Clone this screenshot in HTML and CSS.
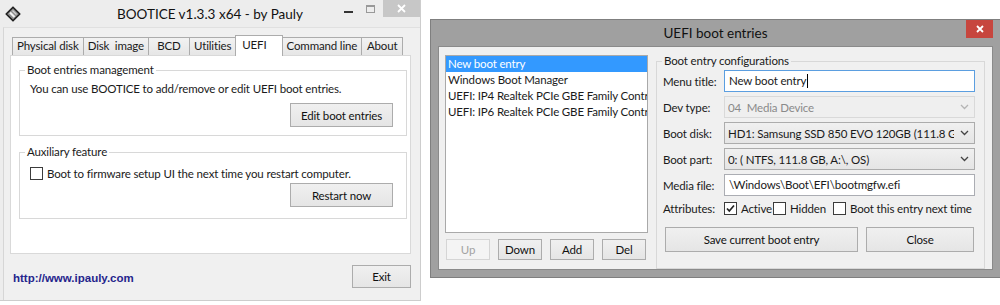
FILE: index.html
```html
<!DOCTYPE html>
<html lang="en">
<head>
  <meta charset="UTF-8" />
  <meta name="viewport" content="width=device-width, initial-scale=1" />
  <title>BOOTICE - UEFI boot entries</title>
  <link rel="stylesheet" href="styles.css">
</head>
<body>
  <div class="win main">
    <div class="titlebar">
      <span class="app-icon">
        <svg width="16" height="16" viewBox="0 0 16 16">
          <path d="M8 1.2 14.8 8 8 14.8 1.2 8Z" fill="#8c8c8c" stroke="#1f1f1f" stroke-width="1.6" stroke-linejoin="round"/>
          <path d="M5 6.5 9.5 11" stroke="#f2f2f2" stroke-width="2.2"/>
          <path d="M7.5 4.5 11.5 8.5" stroke="#d0d0d0" stroke-width="1.4"/>
        </svg>
      </span>
      <span class="title">BOOTICE v1.3.3 x64 - by Pauly</span>
      <span class="controls">
        <span class="ctl min"></span>
        <span class="ctl max"></span>
        <span class="ctl close grey">
          <svg width="9" height="9" viewBox="0 0 9 9"><path d="M1 1 8 8M8 1 1 8" stroke="#fff" stroke-width="1.8"/></svg>
        </span>
      </span>
    </div>

    <div class="client">
      <div class="tabs">
        <span class="tab">Physical disk</span>
        <span class="tab">Disk&nbsp; image</span>
        <span class="tab">BCD</span>
        <span class="tab">Utilities</span>
        <span class="tab active">UEFI</span>
        <span class="tab">Command line</span>
        <span class="tab">About</span>
      </div>

      <div class="panel">
        <fieldset class="group">
          <legend>Boot entries management</legend>
          <p class="note">You can use BOOTICE to add/remove or edit UEFI boot entries.</p>
          <div class="btn-row"><button class="btn wide">Edit boot entries</button></div>
        </fieldset>

        <fieldset class="group second">
          <legend>Auxiliary feature</legend>
          <div class="check"><span class="box"></span>Boot to firmware setup UI the next time you restart computer.</div>
          <div class="btn-row tight"><button class="btn wide">Restart now</button></div>
        </fieldset>
      </div>

      <div class="footer">
        <span class="site">http://www.ipauly.com</span>
        <button class="btn exit">Exit</button>
      </div>
    </div>
  </div>

  <div class="win dialog">
    <div class="titlebar">
      <span></span>
      <span class="title">UEFI boot entries</span>
      <span class="controls">
        <span class="ctl close red">
          <svg width="8" height="8" viewBox="0 0 8 8"><path d="M1 1 7 7M7 1 1 7" stroke="#fff" stroke-width="1.8"/></svg>
        </span>
      </span>
    </div>

    <div class="client">
      <div class="entries">
        <ul class="listbox">
          <li class="sel">New boot entry</li>
          <li>Windows Boot Manager</li>
          <li>UEFI: IP4 Realtek PCIe GBE Family Controller</li>
          <li>UEFI: IP6 Realtek PCIe GBE Family Controller</li>
        </ul>
        <div class="list-btns">
          <button class="btn small" disabled>Up</button>
          <button class="btn small">Down</button>
          <button class="btn small">Add</button>
          <button class="btn small">Del</button>
        </div>
      </div>

      <fieldset class="group config">
        <legend>Boot entry configurations</legend>
        <div class="form">
          <label>Menu title:</label>
          <div class="edit focus">New boot entry<span class="caret"></span></div>

          <label>Dev type:</label>
          <div class="combo disabled">
            <span class="value">04&nbsp; Media Device</span>
            <svg class="chev" width="9" height="6" viewBox="0 0 9 6"><path d="M1 1 4.5 4.5 8 1" fill="none" stroke="#b4b4b4" stroke-width="1.3"/></svg>
          </div>

          <label>Boot disk:</label>
          <div class="combo">
            <span class="value">HD1: Samsung SSD 850 EVO 120GB (111.8 GB, 1 part)</span>
            <svg class="chev" width="9" height="6" viewBox="0 0 9 6"><path d="M1 1 4.5 4.5 8 1" fill="none" stroke="#444" stroke-width="1.3"/></svg>
          </div>

          <label>Boot part:</label>
          <div class="combo">
            <span class="value">0: ( NTFS, 111.8 GB, A:\, OS)</span>
            <svg class="chev" width="9" height="6" viewBox="0 0 9 6"><path d="M1 1 4.5 4.5 8 1" fill="none" stroke="#444" stroke-width="1.3"/></svg>
          </div>

          <label>Media file:</label>
          <div class="edit">\Windows\Boot\EFI\bootmgfw.efi</div>

          <label>Attributes:</label>
          <div class="attrs">
            <span class="check attr-active">
              <span class="box">
                <svg width="11" height="11" viewBox="0 0 11 11"><path d="M2 5.5 4.3 8 9 2.5" fill="none" stroke="#222" stroke-width="1.7"/></svg>
              </span>Active
            </span>
            <span class="check attr-hidden"><span class="box"></span>Hidden</span>
            <span class="check"><span class="box"></span>Boot this entry next time</span>
          </div>
        </div>

        <div class="actions">
          <button class="btn save">Save current boot entry</button>
          <button class="btn close-btn">Close</button>
        </div>
      </fieldset>
    </div>
  </div>
</body>
</html>
```

FILE: styles.css
```css
* {
  box-sizing: border-box;
}
body {
  margin: 0;
  width: 1000px;
  height: 305px;
  overflow: hidden;
  display: flex;
  align-items: flex-start;
  background: #fff;
  font-family: Lato, "Noto Sans", sans-serif;
  font-size: 11.5px;
  letter-spacing: -0.15px;
  color: #1a1a1a;
}

/* window chrome */
.win {
  display: flex;
  flex-direction: column;
}
.titlebar {
  display: grid;
  grid-template-columns: minmax(0, 1fr) auto minmax(0, 1fr);
  align-items: center;
  flex: none;
}
.titlebar .title {
  font-size: 13.5px;
  letter-spacing: 0;
  color: #111;
}
.controls {
  justify-self: end;
  align-self: start;
  display: flex;
  align-items: flex-start;
}
.ctl {
  display: block;
}
.ctl.min {
  width: 9px;
  height: 2px;
  margin: 11px 13px 0 0;
  background: #333;
}
.ctl.max {
  width: 9px;
  height: 8px;
  margin: 5px 8px 0 0;
  border: 1px solid #999;
  border-top-width: 2px;
}
.ctl.close {
  display: flex;
  align-items: center;
  justify-content: center;
}
.ctl.close.grey {
  width: 37px;
  height: 17px;
  background: #c7c7c7;
}
.ctl.close.red {
  width: 27px;
  height: 18px;
  background: #c7463e;
}

/* main BOOTICE window */
.main {
  width: 421px;
  height: 301px;
  flex: none;
  background: #ededed;
  border-right: 1px solid #cdcdcd;
  border-bottom: 1px solid #cdcdcd;
}
.main .titlebar {
  height: 27px;
}
.app-icon {
  margin-left: 5px;
  display: flex;
}
.main .client {
  flex: 1;
  margin-left: 3px;
  border-left: 1px solid #d6d6d6;
  border-top: 1px solid #e0e0e0;
  background: #f0f0f0;
  padding: 7px 9px 0 6px;
}
.tabs {
  display: flex;
  align-items: flex-end;
  height: 20px;
  margin-left: 3px;
}
.tab {
  height: 18px;
  min-width: 42px;
  line-height: 16px;
  padding: 0 4px;
  margin-left: -1px;
  text-align: center;
  border: 1px solid #acacac;
  border-bottom: none;
  background: linear-gradient(#f2f2f2, #e6e6e6);
  white-space: nowrap;
}
.tab.active {
  position: relative;
  z-index: 1;
  height: 21px;
  margin-bottom: -1px;
  padding: 0 15px 0 6px;
  text-align: left;
  background: #fff;
  line-height: 17px;
}
.panel {
  height: 199px;
  background: #fff;
  border: 1px solid #d9d9d9;
  padding: 7px 3px 0 8px;
}

/* group boxes */
.group {
  margin: 0;
  min-width: 0;
  border: 1px solid #d8d8d8;
  padding: 0 13px 8px 10px;
}
.group legend {
  padding: 0 2px;
  margin-left: -5px;
  line-height: 14px;
}
.group.second {
  margin-top: 9px;
  padding-bottom: 11px;
}
.note {
  margin: 4px 0 0;
  line-height: 16px;
}
.btn-row {
  display: flex;
  justify-content: flex-end;
  margin-top: 6px;
}
.btn-row.tight {
  margin-top: 2px;
}
.check {
  display: flex;
  align-items: center;
  height: 16px;
  white-space: nowrap;
}
.group.second .check {
  margin-top: 6px;
}
.box {
  width: 13px;
  height: 13px;
  flex: none;
  margin-right: 4px;
  border: 1px solid #3c3c3c;
  background: #fff;
  display: flex;
  align-items: center;
  justify-content: center;
}

/* buttons */
.btn {
  font: inherit;
  letter-spacing: inherit;
  color: #111;
  height: 24px;
  padding: 0 6px;
  border: 1px solid #acacac;
  border-radius: 0;
  background: linear-gradient(#f0f0f0, #e5e5e5);
  white-space: nowrap;
}
.btn:disabled {
  color: #a3a3a3;
  border-color: #d5d5d5;
  background: #f4f4f4;
}
.btn.wide {
  width: 103px;
}
.footer {
  display: flex;
  align-items: center;
  justify-content: space-between;
  margin-top: 11px;
  padding-left: 3px;
}
.site {
  font-family: "Liberation Sans", Arial, sans-serif;
  font-weight: bold;
  font-size: 11.5px;
  letter-spacing: 0;
  color: #25258c;
  margin-top: 2px;
}
.btn.exit {
  width: 59px;
  height: 23px;
}

/* UEFI boot entries dialog */
.dialog {
  width: 570px;
  height: 259px;
  flex: none;
  margin: 19px 0 0 9px;
  background: #a0a0a0;
  border: 1px solid #7f7f7f;
  border-right: none;
  padding: 0 7px 7px 7px;
}
.dialog .titlebar {
  height: 26px;
}
.dialog .client {
  flex: 1;
  display: flex;
  gap: 8px;
  background: #f0f0f0;
  border: 1px solid #8a8a8a;
  padding: 7px 7px 0 6px;
}
.entries {
  width: 203px;
  flex: none;
  display: flex;
  flex-direction: column;
}
.listbox {
  list-style: none;
  margin: 1px 0 0;
  padding: 0;
  height: 178px;
  background: #fff;
  border: 1px solid #a9a9a9;
  overflow: hidden;
}
.listbox li {
  height: 16px;
  line-height: 16px;
  padding: 0 2px;
  white-space: nowrap;
  overflow: hidden;
}
.listbox li.sel {
  background: #3399ff;
  color: #fff;
}
.list-btns {
  display: flex;
  gap: 8px;
  margin: 6px 0 0 1px;
}
.btn.small {
  width: 44px;
  height: 21px;
  padding: 0;
}
.group.config {
  flex: 1;
  padding: 0 9px 8px 6px;
}
.group.config legend {
  margin-left: -1px;
}
.form {
  display: grid;
  grid-template-columns: 61px minmax(0, 1fr);
  grid-template-rows: repeat(5, 22px) 16px;
  row-gap: 4px;
  align-items: center;
  margin-top: 2px;
}
.form label {
  white-space: nowrap;
}
.edit {
  height: 22px;
  line-height: 20px;
  padding: 0 4px;
  background: #fff;
  border: 1px solid #abadb3;
  white-space: nowrap;
  overflow: hidden;
}
.edit.focus {
  border-color: #5b9ee0;
}
.caret {
  display: inline-block;
  width: 1px;
  height: 14px;
  margin-left: 1px;
  background: #000;
  vertical-align: -3px;
}
.combo {
  height: 22px;
  display: flex;
  align-items: center;
  padding: 0 5px 0 3px;
  border: 1px solid #acacac;
  background: linear-gradient(#f0f0f0, #e5e5e5);
  overflow: hidden;
}
.combo .value {
  flex: 1;
  min-width: 0;
  overflow: hidden;
  white-space: nowrap;
}
.combo .chev {
  flex: none;
  margin-left: 6px;
}
.combo.disabled {
  color: #8a8a8a;
  border-color: #d9d9d9;
  background: #efefef;
}
.attrs {
  display: flex;
  align-items: center;
}
.attr-active {
  width: 49px;
}
.attr-hidden {
  width: 60px;
}
.actions {
  display: flex;
  gap: 8px;
  margin-top: 11px;
  padding: 0 1px 0 2px;
}
.btn.save {
  flex: 1;
  height: 25px;
}
.btn.close-btn {
  width: 108px;
  height: 25px;
}
```
